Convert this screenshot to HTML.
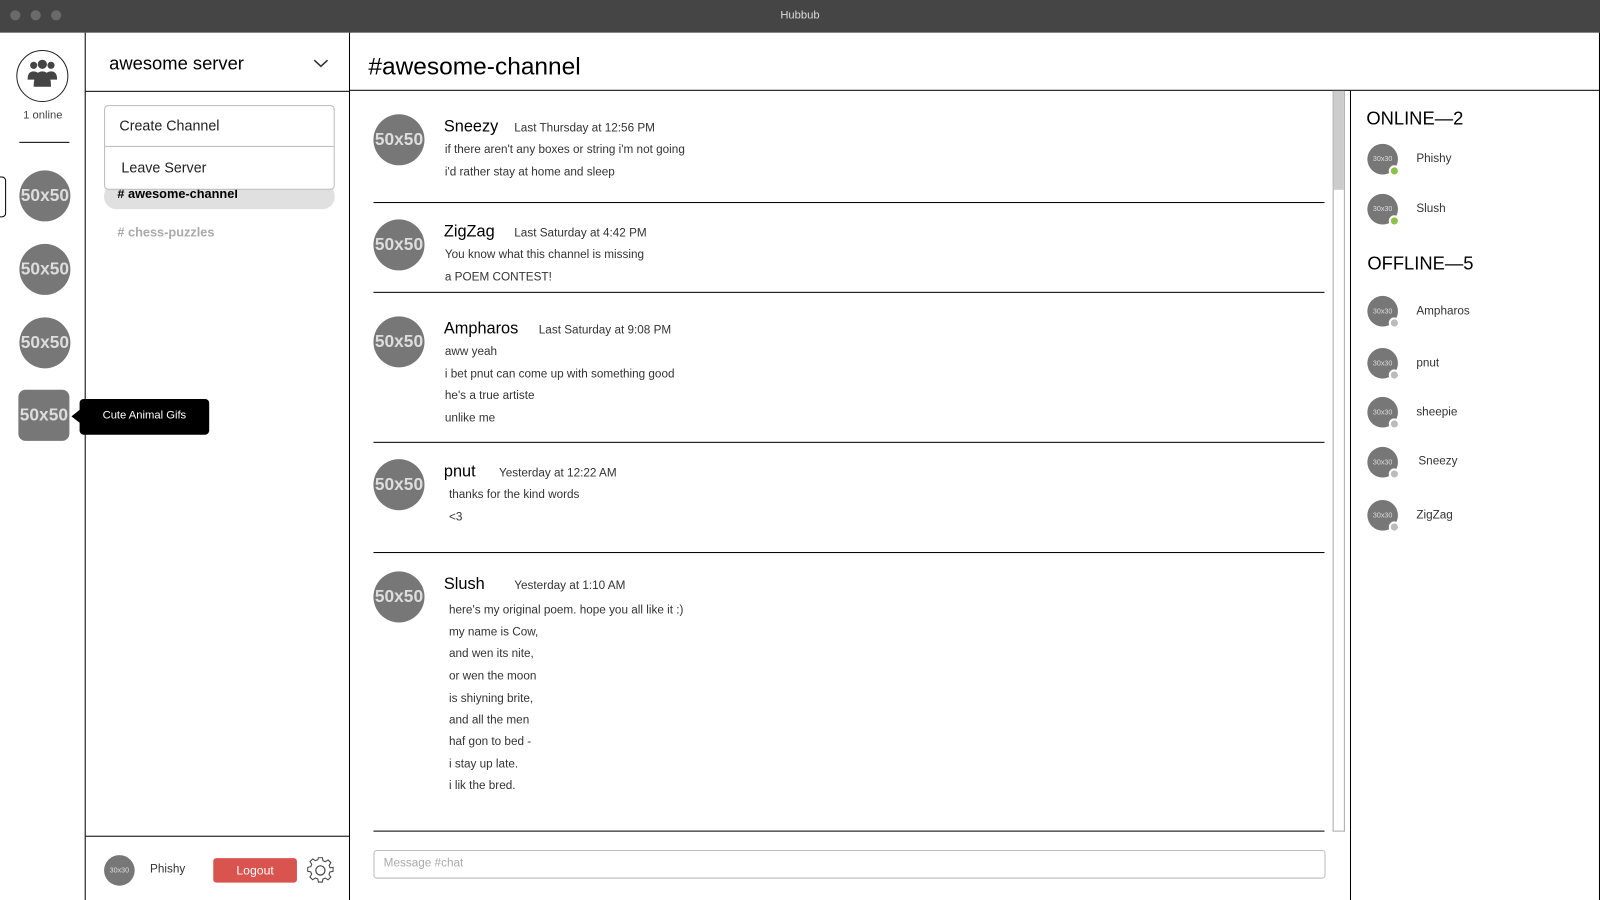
<!DOCTYPE html>
<html><head><meta charset="utf-8"><style>
*{box-sizing:border-box;margin:0;padding:0}
html,body{width:1600px;height:900px;overflow:hidden;background:#fff}
#w{position:absolute;left:0;top:0;width:1568px;height:882px;transform:scale(1.0204);transform-origin:0 0;font-family:"Liberation Sans",sans-serif;color:#000}
.a{position:absolute}
.t{font-family:"Liberation Sans",sans-serif}
.av50{position:absolute;width:50px;height:50px;border-radius:50%;background:#777;color:#ddd;font:bold 17px "Liberation Sans",sans-serif;display:flex;align-items:center;justify-content:center}
.av30{position:absolute;width:30px;height:30px;border-radius:50%;background:#777;color:#ddd;font:7px "Liberation Sans",sans-serif;display:flex;align-items:center;justify-content:center}
.dot{position:absolute;right:-2px;bottom:-2px;width:11px;height:11px;border-radius:50%;border:2px solid #fff}
.name{position:absolute;font-size:16px}
.time{position:absolute;font:11.5px "Liberation Sans",sans-serif;color:#333}
.line{position:absolute;font:11.5px "Liberation Sans",sans-serif;color:#333}
.hr{position:absolute;left:366px;width:932px;height:1px;background:#000}
.mem{position:absolute;font:11.5px "Liberation Sans",sans-serif;color:#333}
</style></head><body><div id="w">
<div class="a" style="left:0;top:0;width:1568px;height:32px;background:#454545"></div>
<div class="a" style="left:10px;top:10px;width:10px;height:10px;border-radius:50%;background:#6a6a6a"></div>
<div class="a" style="left:30px;top:10px;width:10px;height:10px;border-radius:50%;background:#6a6a6a"></div>
<div class="a" style="left:50px;top:10px;width:10px;height:10px;border-radius:50%;background:#6a6a6a"></div>
<div class="a t" style="left:0;width:1568px;top:9px;text-align:center;color:#ddd;font-size:11px">Hubbub</div>

<div class="a" style="left:16px;top:49px;width:51px;height:51px;border-radius:50%;border:1px solid #222"></div>
<svg class="a" style="left:27px;top:58px" width="29" height="28" viewBox="0 0 29 28"><g fill="#444"><circle cx="6" cy="6" r="3.5"/><circle cx="23" cy="6" r="3.5"/><circle cx="14.5" cy="5" r="4.5"/><path d="M0 20 q0-8 6-8 q4 0 5 3 v5z"/><path d="M29 20 q0-8-6-8 q-4 0-5 3 v5z"/><path d="M6 27 q0-15 8.5-15 q8.5 0 8.5 15z"/></g></svg>
<div class="a t" style="left:0;width:84px;top:107px;text-align:center;font-size:11px;color:#444">1 online</div>
<div class="a" style="left:19px;top:139px;width:49px;height:1px;background:#000"></div>
<div class="a" style="left:-6px;top:173px;width:12px;height:40px;border:1px solid #000;border-radius:4px"></div>
<div class="av50" style="left:19px;top:167px">50x50</div>
<div class="av50" style="left:19px;top:239px">50x50</div>
<div class="av50" style="left:19px;top:311px">50x50</div>
<div class="av50" style="left:18px;top:382px;border-radius:7px">50x50</div>
<div class="a" style="left:78px;top:391px;width:127px;height:35px;background:#000;border-radius:4px"></div>
<div class="a" style="left:70px;top:401px;width:0;height:0;border-top:7px solid transparent;border-bottom:7px solid transparent;border-right:9px solid #000"></div>
<div class="a t" style="left:78px;top:401px;width:127px;text-align:center;color:#fff;font-size:11px">Cute Animal Gifs</div>
<div class="a" style="left:83px;top:32px;width:1px;height:850px;background:#000"></div>

<div class="a" style="left:107px;top:52px;font-size:18px">awesome server</div>
<svg class="a" style="left:307px;top:57px" width="15" height="10"><path d="M1 2 L7.5 8 L14 2" stroke="#333" stroke-width="1.6" fill="none"/></svg>
<div class="a" style="left:84px;top:89px;width:258px;height:1px;background:#000"></div>
<div class="a" style="left:102px;top:180px;width:226px;height:25px;background:#e0e0e0;border-radius:12px"></div>
<div class="a t" style="left:115px;top:183px;font-size:12.5px;font-weight:bold"># awesome-channel</div>
<div class="a t" style="left:115px;top:221px;font-size:12.5px;font-weight:bold;color:#aaa"># chess-puzzles</div>
<div class="a" style="left:102px;top:103px;width:226px;height:83px;background:#fff;border:1px solid #bbb;border-radius:4px"></div>
<div class="a" style="left:103px;top:143px;width:224px;height:1px;background:#bbb"></div>
<div class="a t" style="left:117px;top:115px;font-size:14px;color:#222">Create Channel</div>
<div class="a t" style="left:119px;top:156px;font-size:14px;color:#222">Leave Server</div>
<div class="a" style="left:84px;top:819px;width:258px;height:1px;background:#000"></div>
<div class="av30" style="left:102px;top:838px">30x30</div>
<div class="a t" style="left:147px;top:846px;font-size:11.5px;color:#333">Phishy</div>
<div class="a" style="left:209px;top:841px;width:82px;height:24px;background:#d9534f;border-radius:3px;color:#fff;font-size:12px;text-align:center;line-height:24px">Logout</div>
<svg class="a" style="left:301px;top:840px" width="26" height="26" viewBox="0 0 26 26"><path d="M11 1h4l.7 3.2 2.4 1 2.8-1.8 2.8 2.8-1.8 2.8 1 2.4L26 11v4l-3.2.7-1 2.4 1.8 2.8-2.8 2.8-2.8-1.8-2.4 1L15 26h-4l-.7-3.2-2.4-1-2.8 1.8-2.8-2.8 1.8-2.8-1-2.4L0 15v-4l3.2-.7 1-2.4L2.4 5.1l2.8-2.8 2.8 1.8 2.4-1z" transform="translate(.5 -.5) scale(.96)" fill="none" stroke="#444" stroke-width="1.1"/><circle cx="13" cy="13" r="4.5" fill="none" stroke="#444" stroke-width="1.2"/></svg>
<div class="a" style="left:342px;top:32px;width:1px;height:850px;background:#000"></div>

<div class="a" style="left:361px;top:52px;font-size:24px">#awesome-channel</div>
<div class="a" style="left:343px;top:88px;width:1225px;height:1px;background:#000"></div>
<div class="a" style="left:1567px;top:32px;width:1px;height:850px;background:#000"></div>
<div class="a" style="left:1306px;top:89px;width:12px;height:726px;border:1px solid #aaa;border-top:0"></div>
<div class="a" style="left:1307px;top:89px;width:10px;height:97px;background:#ccc"></div>
<div class="a" style="left:1323px;top:89px;width:1px;height:793px;background:#000"></div>

<div class="av50" style="left:366px;top:112px">50x50</div>
<div class="name" style="left:435px;top:116px">Sneezy</div><div class="time" style="left:504px;top:120px">Last Thursday at 12:56 PM</div>
<div class="line" style="left:436px;top:141px">if there aren't any boxes or string i'm not going</div>
<div class="line" style="left:436px;top:163px">i'd rather stay at home and sleep</div>
<div class="hr" style="top:198px"></div>

<div class="av50" style="left:366px;top:215px">50x50</div>
<div class="name" style="left:435px;top:219px">ZigZag</div><div class="time" style="left:504px;top:223px">Last Saturday at 4:42 PM</div>
<div class="line" style="left:436px;top:244px">You know what this channel is missing</div>
<div class="line" style="left:436px;top:266px">a POEM CONTEST!</div>
<div class="hr" style="top:286px"></div>

<div class="av50" style="left:366px;top:310px">50x50</div>
<div class="name" style="left:435px;top:314px">Ampharos</div><div class="time" style="left:528px;top:318px">Last Saturday at 9:08 PM</div>
<div class="line" style="left:436px;top:339px">aww yeah</div>
<div class="line" style="left:436px;top:361px">i bet pnut can come up with something good</div>
<div class="line" style="left:436px;top:382px">he's a true artiste</div>
<div class="line" style="left:436px;top:404px">unlike me</div>
<div class="hr" style="top:433px"></div>

<div class="av50" style="left:366px;top:450px">50x50</div>
<div class="name" style="left:435px;top:454px">pnut</div><div class="time" style="left:489px;top:458px">Yesterday at 12:22 AM</div>
<div class="line" style="left:440px;top:479px">thanks for the kind words</div>
<div class="line" style="left:440px;top:501px">&lt;3</div>
<div class="hr" style="top:541px"></div>

<div class="av50" style="left:366px;top:560px">50x50</div>
<div class="name" style="left:435px;top:564px">Slush</div><div class="time" style="left:504px;top:568px">Yesterday at 1:10 AM</div>
<div class="line" style="left:440px;top:592px">here's my original poem. hope you all like it :)</div>
<div class="line" style="left:440px;top:614px">my name is Cow,</div>
<div class="line" style="left:440px;top:635px">and wen its nite,</div>
<div class="line" style="left:440px;top:657px">or wen the moon</div>
<div class="line" style="left:440px;top:679px">is shiyning brite,</div>
<div class="line" style="left:440px;top:700px">and all the men</div>
<div class="line" style="left:440px;top:721px">haf gon to bed -</div>
<div class="line" style="left:440px;top:743px">i stay up late.</div>
<div class="line" style="left:440px;top:764px">i lik the bred.</div>
<div class="hr" style="top:814px"></div>
<div class="a" style="left:366px;top:833px;width:933px;height:28px;border:1px solid #bbb;border-radius:3px"></div>
<div class="a t" style="left:376px;top:840px;font-size:11.5px;color:#aaa">Message #chat</div>

<div class="a" style="left:1339px;top:106px;font-size:18px">ONLINE—2</div>
<div class="av30" style="left:1340px;top:141px">30x30<div class="dot" style="background:#8bc34a"></div></div><div class="mem" style="left:1388px;top:150px">Phishy</div>
<div class="av30" style="left:1340px;top:190px">30x30<div class="dot" style="background:#8bc34a"></div></div><div class="mem" style="left:1388px;top:199px">Slush</div>
<div class="a" style="left:1340px;top:248px;font-size:18px">OFFLINE—5</div>
<div class="av30" style="left:1340px;top:290px">30x30<div class="dot" style="background:#bbb"></div></div><div class="mem" style="left:1388px;top:299px">Ampharos</div>
<div class="av30" style="left:1340px;top:341px">30x30<div class="dot" style="background:#bbb"></div></div><div class="mem" style="left:1388px;top:350px">pnut</div>
<div class="av30" style="left:1340px;top:389px">30x30<div class="dot" style="background:#bbb"></div></div><div class="mem" style="left:1388px;top:398px">sheepie</div>
<div class="av30" style="left:1340px;top:438px">30x30<div class="dot" style="background:#bbb"></div></div><div class="mem" style="left:1390px;top:446px">Sneezy</div>
<div class="av30" style="left:1340px;top:490px">30x30<div class="dot" style="background:#bbb"></div></div><div class="mem" style="left:1388px;top:499px">ZigZag</div>
</div></body></html>
